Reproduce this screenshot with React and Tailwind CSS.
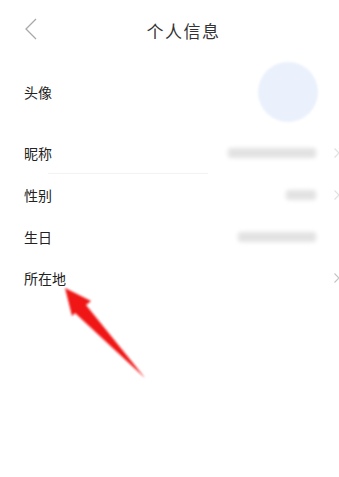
import React from "react";

const rows = [
  { label: "昵称", w: "w-[88px]", arrow: true },
  { label: "性别", w: "w-[30px]", arrow: true },
  { label: "生日", w: "w-[78px]", arrow: false },
];

const Chevron = () => (
  <svg width="8" height="12" viewBox="0 0 8 12" className="shrink-0">
    <path d="M1.5 1.5 L6 6 L1.5 10.5" fill="none" stroke="#c4c4c4" strokeWidth="1.2" />
  </svg>
);

export default function App() {
  return (
    <div
      className="relative w-[339px] h-[477px] bg-white overflow-hidden text-[#222]"
      style={{ fontFamily: '"Noto Sans CJK SC", "Noto Sans", sans-serif' }}
    >
      {/* header */}
      <div className="relative h-[62px] flex items-center justify-center">
        <svg width="14" height="24" viewBox="0 0 14 24" className="absolute left-[24px] top-[17px]">
          <path d="M12 2 L2 12 L12 22" fill="none" stroke="#a8a8a8" strokeWidth="1.3" />
        </svg>
        <span className="ml-[28px] text-[17px] text-[#333] tracking-[1.5px]">个人信息</span>
      </div>

      {/* avatar */}
      <div className="flex items-center justify-between pl-[24px] pr-[21px] h-[60px]">
        <span className="text-[14px]">头像</span>
        <div className="w-[60px] h-[60px] rounded-full bg-[#eaf1fc] blur-[1px]" />
      </div>

      <div className="h-[10px]" />

      <div className="flex flex-col">
        {rows.map((r, i) => (
          <div key={r.label} className="relative flex items-center h-[42px] pl-[24px]">
            <span className="text-[14px]">{r.label}</span>
            <div className="ml-auto flex items-center gap-[17px] mr-[-2px]">
              <div className={`${r.w} h-[10px] rounded-[3px] bg-[#e2e2e2] blur-[2px]`} />
              <div className="w-[8px] opacity-50 blur-[0.5px]">{r.arrow && <Chevron />}</div>
            </div>
            {i === 0 && <div className="absolute left-[48px] w-[160px] bottom-[0px] h-px bg-[#f3f3f3]" />}
          </div>
        ))}
        <div className="flex items-center h-[40px] pl-[24px]">
          <span className="text-[14px]">所在地</span>
          <div className="ml-auto mr-[-2px] w-[8px]">
            <Chevron />
          </div>
        </div>
      </div>

      {/* red arrow annotation */}
      <svg width="339" height="477" className="absolute left-0 top-0 pointer-events-none">
        <defs>
          <filter id="soft" x="-20%" y="-20%" width="140%" height="140%">
            <feGaussianBlur stdDeviation="0.8" />
          </filter>
        </defs>
        <g filter="url(#soft)">
          <polygon points="65,288 91,301 86,305 145,378 75,313 72,316" fill="#f01414" />
        </g>
      </svg>
    </div>
  );
}
